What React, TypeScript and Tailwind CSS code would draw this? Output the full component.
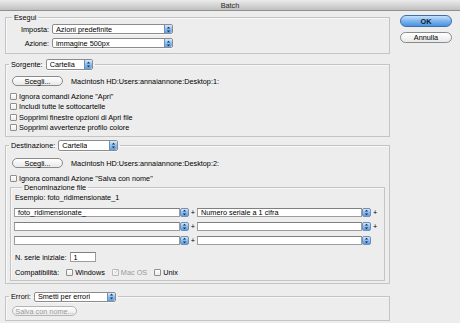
import { ReactNode } from "react";

const Stepper = ({ className = "" }: { className?: string }) => (
  <span
    className={`flex items-center justify-center rounded-[2px] border border-[#6d8fb8] bg-gradient-to-b from-[#d6e9fc] via-[#8dbdf0] to-[#5e9ee3] ${className}`}
  >
    <svg width="5" height="7" viewBox="0 0 5 7">
      <path d="M0.8 2.6 L2.5 0.8 L4.2 2.6Z" fill="#1b2a40" />
      <path d="M0.8 4.4 L2.5 6.2 L4.2 4.4Z" fill="#1b2a40" />
    </svg>
  </span>
);

const Select = ({ value, className }: { value: string; className: string }) => (
  <div
    className={`flex items-center rounded-[2px] border border-[#8c8c8c] bg-white pl-[3px] shadow-[0_1px_0_#f8f8f8] ${className}`}
  >
    <span className="truncate">{value}</span>
    <Stepper className="ml-auto h-full w-[8px] rounded-l-none border-y-0 border-r-0" />
  </div>
);

const Pill = ({ children, className }: { children: ReactNode; className: string }) => (
  <div
    className={`flex items-center justify-center rounded-full border border-[#8a8a8a] bg-gradient-to-b from-white to-[#e9e9e9] ${className}`}
  >
    {children}
  </div>
);

const Check = ({ label, checked, disabled }: { label: string; checked?: boolean; disabled?: boolean }) => (
  <div className="flex items-center gap-[2px]">
    <span
      className={`flex h-[7px] w-[7px] items-center justify-center rounded-[1px] border bg-gradient-to-b from-white to-[#ececec] ${
        disabled ? "border-[#b9b9b9]" : "border-[#8f8f8f]"
      }`}
    >
      {checked && (
        <svg width="7" height="7" viewBox="0 0 7 7" className="-mt-[2px] ml-[1px]">
          <path d="M1 3.6 L2.7 5.6 L6.2 0.6" stroke="#9a9a9a" strokeWidth="0.9" fill="none" />
        </svg>
      )}
    </span>
    <span className={disabled ? "text-[#9a9a9a]" : ""}>{label}</span>
  </div>
);

const Field = ({ w, value = "" }: { w: string; value?: string }) => (
  <div className="flex h-[9px] items-center">
    <div
      className={`flex h-full items-center border border-[#9d9d9d] border-t-[#7f7f7f] bg-white pl-[3px] ${w}`}
    >
      {value}
    </div>
    <Stepper className="h-full w-[9px]" />
  </div>
);

const FieldRow = ({ a = "", b = "", plus = true }: { a?: string; b?: string; plus?: boolean }) => (
  <div className="flex items-center">
    <Field w="w-[166px]" value={a} />
    <span className="w-[8px] text-center">+</span>
    <Field w="w-[165px]" value={b} />
    {plus && <span className="ml-[2px]">+</span>}
  </div>
);

export default function App() {
  return (
    <div className="h-[323px] w-[460px] overflow-hidden bg-[#ededed] font-['Liberation_Sans',Arial,sans-serif] text-[7.3px] leading-[9px] text-[#000]">
      <div className="flex h-[11px] items-center justify-center border-b border-[#8f8f8f] bg-gradient-to-b from-[#ececec] to-[#c0c0c0] text-[#2a2a2a]">
        Batch
      </div>

      <div className="flex pl-[5px] pt-[2px]">
        <div className="w-[385px]">
          <fieldset className="border border-[#c4c4c4] pb-[5px] pt-[2px] shadow-[inset_1px_1px_0_#f7f7f7]">
            <legend className="ml-[6px] px-[2px]">Esegui</legend>
            <div className="flex h-[10px] items-center">
              <span className="w-[44px] pr-[1px] text-right">Imposta:</span>
              <Select value="Azioni predefinite" className="ml-[2px] h-[10px] w-[121px]" />
            </div>
            <div className="mt-[4px] flex h-[10px] items-center">
              <span className="w-[44px] pr-[1px] text-right">Azione:</span>
              <Select value="immagine 500px" className="ml-[2px] h-[10px] w-[121px]" />
            </div>
          </fieldset>

          <fieldset className="mt-[5px] border border-[#c4c4c4] pb-[3px] pt-[6px] shadow-[inset_1px_1px_0_#f7f7f7]">
            <legend className="ml-[3px] px-[2px]">
              <span className="flex h-[11px] items-center gap-[3px]">
                Sorgente:
                <Select value="Cartella" className="h-[11px] w-[47px]" />
              </span>
            </legend>
            <div className="flex h-[10px] items-center">
              <Pill className="ml-[6px] h-[10px] w-[51px]">Scegli...</Pill>
              <span className="ml-[8px]">Macintosh HD:Users:annaiannone:Desktop:1:</span>
            </div>
            <div className="ml-[4px] mt-[5px] flex flex-col">
              <div className="flex h-[10.5px] items-center">
                <Check label={'Ignora comandi Azione "Apri"'} />
              </div>
              <div className="flex h-[10.5px] items-center">
                <Check label="Includi tutte le sottocartelle" />
              </div>
              <div className="flex h-[10.5px] items-center">
                <Check label="Sopprimi finestre opzioni di Apri file" />
              </div>
              <div className="flex h-[10.5px] items-center">
                <Check label="Sopprimi avvertenze profilo colore" />
              </div>
            </div>
          </fieldset>

          <fieldset className="mt-[3px] border border-[#c4c4c4] pb-[2px] pt-[7px] shadow-[inset_1px_1px_0_#f7f7f7]">
            <legend className="ml-[3px] px-[2px]">
              <span className="flex h-[11px] items-center gap-[3px]">
                Destinazione:
                <Select value="Cartella" className="h-[11px] w-[60px]" />
              </span>
            </legend>
            <div className="flex h-[10px] items-center">
              <Pill className="ml-[6px] h-[10px] w-[51px]">Scegli...</Pill>
              <span className="ml-[8px]">Macintosh HD:Users:annaiannone:Desktop:2:</span>
            </div>
            <div className="ml-[4px] mt-[5px] flex h-[10px] items-center">
              <Check label={'Ignora comandi Azione "Salva con nome"'} />
            </div>

            <fieldset className="mx-[4px] border border-[#c4c4c4] pb-[3px] pl-[3px] shadow-[inset_1px_1px_0_#f7f7f7]">
              <legend className="ml-[8px] px-[2px]">Denominazione file</legend>
              <div className="flex h-[10px] items-center pl-[1px]">Esempio: foto_ridimensionate_1</div>
              <div className="mt-[6px] flex flex-col gap-[5px]">
                <FieldRow a="foto_ridimensionate_" b="Numero seriale a 1 cifra" />
                <FieldRow />
                <FieldRow plus={false} />
              </div>
              <div className="mt-[7px] flex h-[10px] items-center pl-[1px]">
                <span>N. serie iniziale:</span>
                <div className="ml-[3px] flex h-[10px] w-[26px] items-center border border-[#9d9d9d] border-t-[#7f7f7f] bg-white pl-[3px]">
                  1
                </div>
              </div>
              <div className="mt-[5px] flex h-[10px] items-center gap-[7px] pl-[1px]">
                <span>Compatibilità:</span>
                <Check label="Windows" />
                <Check label="Mac OS" checked disabled />
                <Check label="Unix" />
              </div>
            </fieldset>
          </fieldset>

          <fieldset className="mt-[7px] border border-[#c4c4c4] pb-[4px] pt-[4px] shadow-[inset_1px_1px_0_#f7f7f7]">
            <legend className="ml-[3px] px-[2px]">
              <span className="flex h-[11px] items-center gap-[3px]">
                Errori:
                <Select value="Smetti per errori" className="h-[10px] w-[82px]" />
              </span>
            </legend>
            <Pill className="ml-[6px] h-[10px] w-[65px] border-[#b5b5b5] text-[#9a9a9a]">Salva con nome...</Pill>
          </fieldset>
        </div>

        <div className="ml-[10px] flex flex-col gap-[5px] pt-[2px]">
          <div className="flex h-[12px] w-[52px] items-center justify-center rounded-full border border-[#3f6fa8] bg-gradient-to-b from-[#c7e1fb] via-[#7db5ee] to-[#4b92de] font-bold text-[#0d1a2b]">
            OK
          </div>
          <Pill className="h-[11px] w-[52px]">Annulla</Pill>
        </div>
      </div>
    </div>
  );
}
